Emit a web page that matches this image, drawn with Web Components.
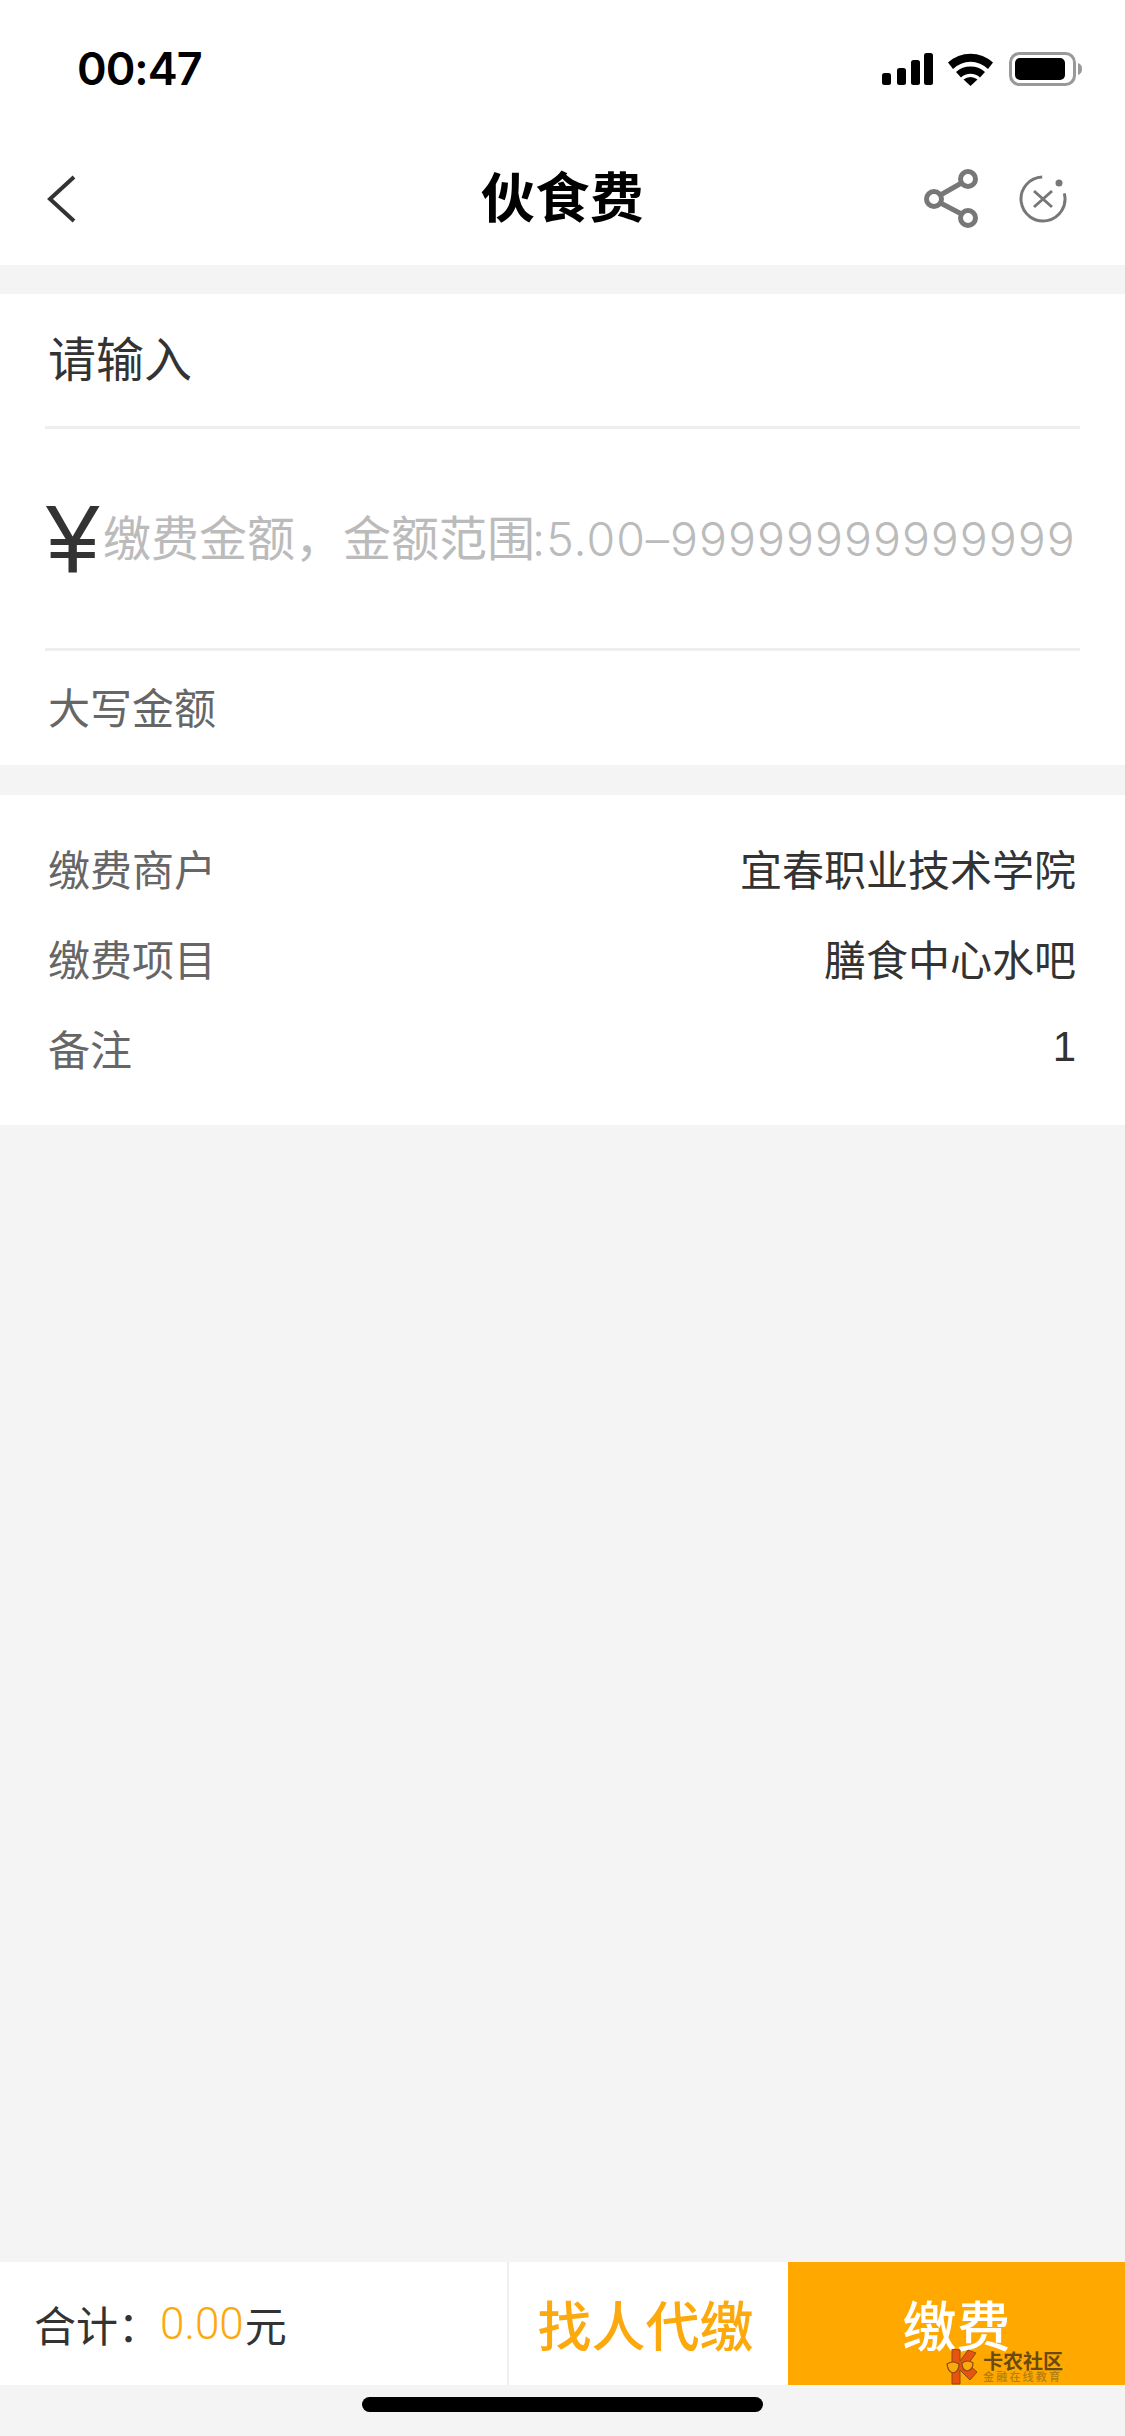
<!DOCTYPE html>
<html>
<head>
<meta charset="utf-8">
<style>
  html, body { margin: 0; padding: 0; background: #f4f4f4; }
  body { font-family: "Noto Sans CJK SC", "Liberation Sans", sans-serif; }
</style>
</head>
<body>
<pay-page>
  <status-bar slot="top"></status-bar>
  <nav-bar slot="top" title="伙食费"></nav-bar>
  <amount-card></amount-card>
  <info-card>
    <info-row label="缴费商户" value="宜春职业技术学院"></info-row>
    <info-row label="缴费项目" value="膳食中心水吧"></info-row>
    <info-row label="备注" value="1"></info-row>
  </info-card>
  <pay-bar slot="bottom"></pay-bar>
  <home-bar slot="bottom"></home-bar>
</pay-page>

<script>
const FONT = '"Noto Sans CJK SC", "Liberation Sans", sans-serif'

// small helper so every element below reads the same
function shadow (el, html) {
  el.attachShadow({ mode: 'open' }).innerHTML = html
}

customElements.define('pay-page', class extends HTMLElement {
  constructor () {
    super()
    shadow(this, `
      <style>
        :host { display: flex; flex-direction: column; width: 1125px; height: 2436px; background: #f4f4f4; overflow: hidden; }
        .main { flex: 1; display: flex; flex-direction: column; gap: 30px; padding-top: 29px; }
      </style>
      <slot name="top"></slot>
      <div class="main"><slot></slot></div>
      <slot name="bottom"></slot>
    `)
  }
})

customElements.define('status-bar', class extends HTMLElement {
  constructor () {
    super()
    shadow(this, `
      <style>
        :host { display: flex; align-items: center; justify-content: space-between; height: 127px; padding: 5px 43px 0 77px; background: #fff; box-sizing: content-box; width: 1005px; }
        .time { font: 600 45px Inter, "Liberation Sans", sans-serif; color: #000; letter-spacing: -1px; }
        svg { display: block; }
      </style>
      <span class="time">00:47</span>
      <svg width="200" height="36" viewBox="882 51 200 36">
        <g fill="#000">
          <rect x="882" y="73" width="9" height="12" rx="2.5"/>
          <rect x="897" y="68" width="9" height="17" rx="2.5"/>
          <rect x="911" y="60" width="9" height="25" rx="2.5"/>
          <rect x="924" y="53" width="9" height="32" rx="2.5"/>
          <path d="M948 62.5 A33 33 0 0 1 993 62.5 L988 69 A25 25 0 0 0 953 69 Z"/>
          <path d="M956 72 A22 22 0 0 1 985 72 L980 77.5 A14 14 0 0 0 961 77.5 Z"/>
          <path d="M963.5 79.5 A11 11 0 0 1 977.5 79.5 L970.5 86 Z"/>
        </g>
        <rect x="1010.5" y="53.5" width="64" height="31" rx="9" fill="none" stroke="#999" stroke-width="3"/>
        <rect x="1015" y="58" width="50" height="22" rx="5" fill="#000"/>
        <path d="M1078 63 C1081 64 1082 66 1082 69 C1082 72 1081 74 1078 75 Z" fill="#999"/>
      </svg>
    `)
  }
})

customElements.define('nav-bar', class extends HTMLElement {
  constructor () {
    super()
    shadow(this, `
      <style>
        :host { display: grid; grid-template-columns: 1fr auto 1fr; align-items: center; height: 133px; background: #fff; font-family: ${FONT}; }
        .back { padding-left: 47px; display: flex; }
        h1 { margin: 0 0 8px; font-size: 54px; font-weight: 700; color: #000; line-height: 1; letter-spacing: 0.5px; }
        .acts { display: flex; justify-content: flex-end; align-items: center; gap: 40px; padding-right: 57px; }
        svg { display: block; }
      </style>
      <div class="back">
        <svg width="30" height="48" viewBox="0 0 30 48"><path d="M27 2 L3 24 L27 46" fill="none" stroke="#333" stroke-width="4"/></svg>
      </div>
      <h1></h1>
      <div class="acts">
        <svg width="54" height="60" viewBox="0 0 54 60" fill="none" stroke="#777" stroke-width="5">
          <circle cx="44" cy="10" r="7.5"/>
          <circle cx="10" cy="30" r="7.5"/>
          <circle cx="44" cy="49" r="7.5"/>
          <path d="M37.5 14 L16.5 26 M16.5 34 L37.5 45"/>
        </svg>
        <svg width="50" height="50" viewBox="0 0 50 50" fill="none" stroke="#777">
          <path d="M46.25 19.3 A22 22 0 1 1 24.2 3" stroke-width="3"/>
          <path d="M16 17 L34 33 M34 17 L16 33" stroke-width="3"/>
          <circle cx="41" cy="9" r="3.5" fill="#777" stroke="none"/>
        </svg>
      </div>
    `)
    this.shadowRoot.querySelector('h1').textContent = this.getAttribute('title')
  }
})

customElements.define('amount-card', class extends HTMLElement {
  constructor () {
    super()
    shadow(this, `
      <style>
        :host { display: flex; flex-direction: column; background: #fff; font-family: ${FONT}; }
        .row { display: flex; align-items: center; margin: 0 45px; box-sizing: border-box; }
        .title { height: 132px; font-size: 48px; color: #333; padding: 0 0 8px 3px; }
        .input { height: 225px; border-top: 3px solid #eee; border-bottom: 3px solid #eee; }
        .yen { font: 96px "Liberation Sans", sans-serif; color: #333; width: 58px; flex: none; line-height: 1; padding-left: 1px; box-sizing: border-box; }
        .ph { font-size: 48px; color: #bbb; white-space: nowrap; padding-bottom: 8px; }
        .ph b { font: 300 46.5px Inter, "Liberation Sans", sans-serif; letter-spacing: 1px; margin-left: -3px; }
        .caps { height: 114px; font-size: 42px; color: #666; padding: 0 0 5px 3px; }
      </style>
      <div class="row title">请输入</div>
      <div class="row input">
        <span class="yen">¥</span>
        <span class="ph">缴费金额，金额范围<b>:5.00–99999999999999</b></span>
      </div>
      <div class="row caps">大写金额</div>
    `)
  }
})

customElements.define('info-card', class extends HTMLElement {
  constructor () {
    super()
    shadow(this, `
      <style>
        :host { display: flex; flex-direction: column; padding: 30px 49px 30px 48px; background: #fff; }
      </style>
      <slot></slot>
    `)
  }
})

customElements.define('info-row', class extends HTMLElement {
  constructor () {
    super()
    shadow(this, `
      <style>
        :host { display: flex; justify-content: space-between; align-items: center; height: 90px; box-sizing: border-box; padding-bottom: 6px; font-family: ${FONT}; font-size: 42px; }
        .l { color: #666; }
        .v { color: #333; font-family: "Liberation Sans", "Noto Sans CJK SC", sans-serif; }
      </style>
      <span class="l"></span><span class="v"></span>
    `)
    this.shadowRoot.querySelector('.l').textContent = this.getAttribute('label')
    this.shadowRoot.querySelector('.v').textContent = this.getAttribute('value')
  }
})

customElements.define('pay-bar', class extends HTMLElement {
  constructor () {
    super()
    shadow(this, `
      <style>
        :host { display: flex; align-items: stretch; height: 123px; background: #fff; font-family: ${FONT}; }
        .sum { flex: none; width: 473px; padding-left: 34px; display: flex; align-items: center; font-size: 42px; color: #333; }
        .sum b { font: 300 44px Roboto, "Liberation Sans", sans-serif; color: #fca90e; margin-right: 1px; }
        .find { flex: none; box-sizing: border-box; width: 281px; padding-right: 6px; border-left: 2px solid #eee; display: flex; align-items: center; justify-content: center; font-size: 54px; font-weight: 500; color: #fca90e; }
        .pay { flex: 1; position: relative; overflow: hidden; background: #ffa800; display: flex; align-items: center; justify-content: center; font-size: 54px; font-weight: 500; color: #fff; }
        .pay span { line-height: 1; }
        .mark { position: absolute; left: 158px; top: 87px; display: flex; gap: 5px; }
        .mark svg { display: block; flex: none; }
        .brand { display: flex; flex-direction: column; line-height: 1; padding-top: 2px; }
        .brand b { font-size: 20px; font-weight: 700; color: #6b4a10; }
        .brand i { font-style: normal; font-size: 11px; color: #b07f10; letter-spacing: 2.2px; white-space: nowrap; }
      </style>
      <div class="sum">合计：<b>0.00</b>元</div>
      <div class="find">找人代缴</div>
      <div class="pay"><span>缴费</span>
        <div class="mark">
          <svg width="32" height="36" viewBox="0 0 32 36">
            <path d="M6 0 L14 1 L14 12 L22 1 L30 4 L22 15 L31 23 L24 31 L14 21 L14 35 L6 35 Z" fill="#e8540f" stroke="#8a4a10" stroke-width="1"/>
            <path d="M1 15 Q7 11 13 15 Q13 23 7 24 Q2 23 1 15 Z M16 14 Q22 10 27 14 Q27 21 21 22 Q16 21 16 14 Z" fill="#fca90e" stroke="#8a4a10" stroke-width="1.2"/>
          </svg>
          <div class="brand"><b>卡农社区</b><i>金融在线教育</i></div>
        </div>
      </div>
    `)
  }
})

customElements.define('home-bar', class extends HTMLElement {
  constructor () {
    super()
    shadow(this, `
      <style>
        :host { display: flex; justify-content: center; height: 51px; padding-top: 12px; box-sizing: border-box; background: #f4f4f4; }
        div { width: 401px; height: 15px; border-radius: 8px; background: #000; }
      </style>
      <div></div>
    `)
  }
})
</script>
</body>
</html>
